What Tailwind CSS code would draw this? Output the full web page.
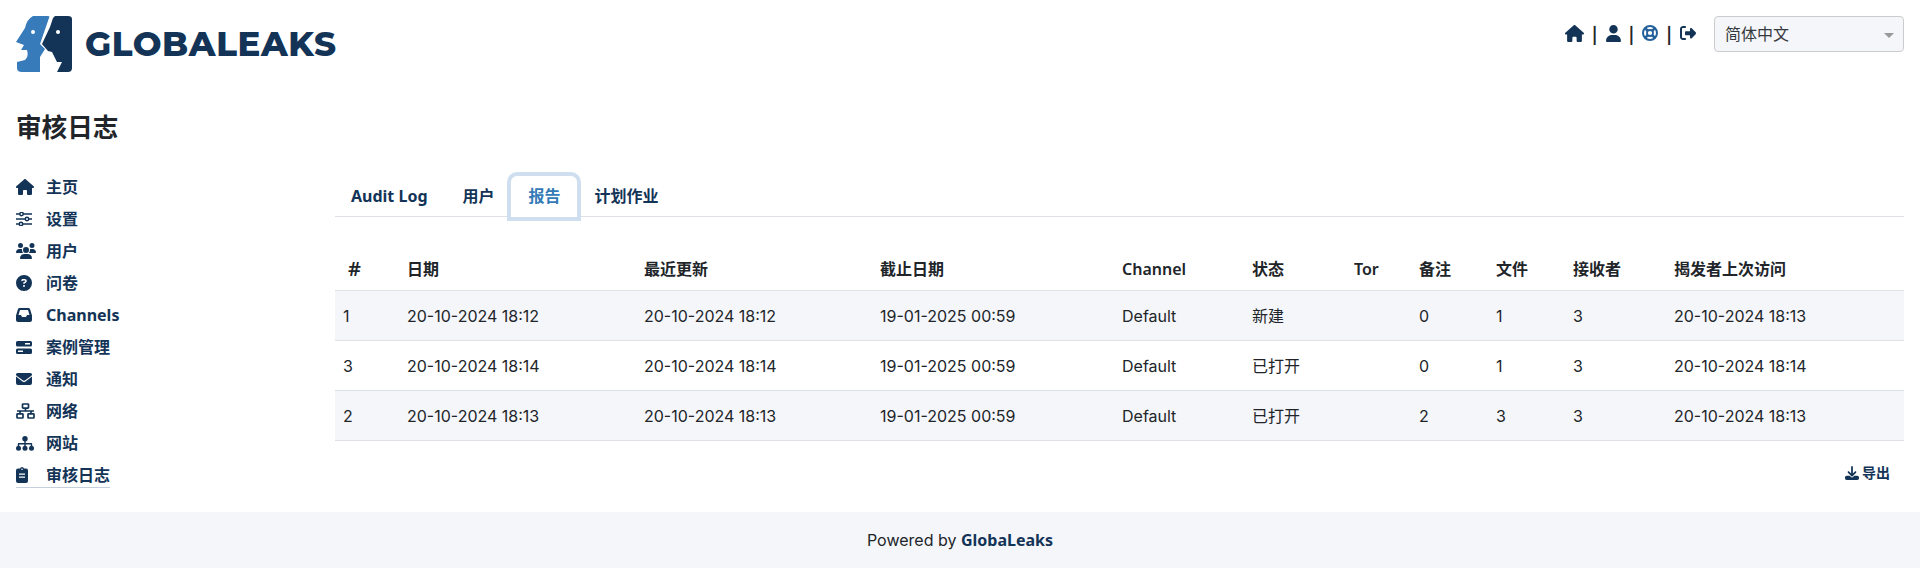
<!DOCTYPE html>
<html lang="zh-CN">
<head>
    <meta charset="UTF-8">
    <title>GlobaLeaks</title>
    <script src="https://cdn.jsdelivr.net/npm/@tailwindcss/browser@4"></script>
</head>
<body class="bg-white text-[#212529] font-['Inter','Noto_Sans_CJK_SC',sans-serif] text-base h-[568px] overflow-hidden flex flex-col">

    <!-- Header -->
    <header class="flex justify-between px-4 pt-4 h-[80px]">
        <div class="flex items-center h-14">
            <svg class="w-[56px] h-[56px] mr-[13px]" viewBox="16 16 56 56">
                <path fill="#377bbb" d="M33 16H48Q50 16 49 18L40 44L45 49L40 57V72H22Q17 72 17 68V62L25 60Q29 56 27 50H21L24 45L16 42L25 28Q27 19 33 16Z"/>
                <circle cx="33" cy="32" r="2" fill="#fff"/>
                <path fill="#133457" d="M55 16H68Q72 16 72 19V68Q72 72 68 72H57L62 62L57 62L52 52L48 51L42 44L50 27L53 18Z"/>
                <circle cx="58" cy="32" r="2" fill="#fff"/>
            </svg>
            <span class="font-['Montserrat','Inter',sans-serif] font-extrabold text-[34px] leading-none tracking-[0.6px] text-[#133457]">GLOBALEAKS</span>
        </div>
        <div class="flex items-start">
            <div class="flex items-center h-[34px] text-[#133457] gap-[8px] mr-[18px]">
                <svg class="w-[19px] h-[17px]" viewBox="0 0 576 512" fill="currentColor"><path d="M575.800 255.500c0 18-15 32.100-32 32.100h-32l.7 160.200c0 2.700-.2 5.400-.5 8.100V472c0 22.100-17.900 40-40 40H456c-1.100 0-2.200 0-3.300-.1c-1.400 .1-2.800 .1-4.200 .1H416 392c-22.100 0-40-17.900-40-40V448 384c0-17.700-14.300-32-32-32H256c-17.700 0-32 14.300-32 32v64 24c0 22.100-17.900 40-40 40H160 128.100c-1.500 0-3-.1-4.500-.2c-1.200 .1-2.400 .2-3.600 .2H104c-22.100 0-40-17.900-40-40V360c0-.9 0-1.900 .1-2.800V287.600H32c-18 0-32-14-32-32.100c0-9 3-17 10-24L266.400 8c7-7 15-8 22-8s15 2 21 7L564.800 231.500c8 7 12 15 11 24z"/></svg>
                <span class="text-[#212529] text-base leading-none mt-[3px] font-semibold">|</span>
                <svg class="w-[15px] h-[17px]" viewBox="0 0 448 512" fill="currentColor"><path d="M224 256A128 128 0 1 0 224 0a128 128 0 1 0 0 256zm-45.700 48C79.800 304 0 383.800 0 482.300C0 498.700 13.300 512 29.700 512H418.300c16.400 0 29.700-13.300 29.700-29.700C448 383.800 368.200 304 269.700 304H178.300z"/></svg>
                <span class="text-[#212529] text-base leading-none mt-[3px] font-semibold">|</span>
                <svg class="w-[16px] h-[16px] text-[#24609b]" viewBox="0 0 16 16" fill="none" stroke="currentColor">
                    <circle cx="8" cy="8" r="7" stroke-width="2"/><circle cx="8" cy="8" r="3" stroke-width="1.800"/>
                    <path d="M3 3L5.800 5.800M13 3L10.200 5.800M3 13L5.800 10.200M13 13L10.200 10.200" stroke-width="2.600"/>
                </svg>
                <span class="text-[#212529] text-base leading-none mt-[3px] font-semibold">|</span>
                <svg class="w-[16px] h-[16px]" viewBox="0 0 512 512" fill="currentColor"><path d="M502.600 278.600c12.500-12.500 12.500-32.800 0-45.300l-128-128c-9.200-9.200-22.900-11.900-34.900-6.900s-19.800 16.600-19.800 29.600l0 72-128 0c-17.700 0-32 14.300-32 32l0 64c0 17.700 14.300 32 32 32l128 0 0 72c0 12.900 7.800 24.600 19.800 29.600s25.700 2.200 34.900-6.900l128-128zM160 96c17.700 0 32-14.300 32-32s-14.300-32-32-32L96 32C43 32 0 75 0 128L0 384c0 53 43 96 96 96l64 0c17.700 0 32-14.300 32-32s-14.300-32-32-32l-64 0c-17.700 0-32-14.300-32-32l0-256c0-17.700 14.300-32 32-32l64 0z"/></svg>
            </div>
            <div class="w-[190px] h-[36px] bg-[#f5f6fa] border border-[#ccc] rounded-[4px] flex items-center justify-between pl-[10px] pr-[9px] text-[#343a40]">
                <span>简体中文</span>
                <span class="w-0 h-0 border-x-[5px] border-x-transparent border-t-[5px] border-t-[#999] mt-[2px]"></span>
            </div>
        </div>
    </header>

    <div class="flex flex-1 min-h-0 px-4">
        <!-- Sidebar -->
        <aside class="w-[319px] shrink-0">
            <h1 class="text-[25.6px] font-bold leading-[32px] mt-[32px] mb-[27px]">审核日志</h1>
            <nav class="flex flex-col text-[#133457] font-['Noto_Sans','Noto_Sans_CJK_SC',sans-serif] font-bold text-base">
                <a class="flex items-center h-[32px]"><span class="w-[30px] flex"><svg class="w-[18px] h-[16px]" viewBox="0 0 576 512" fill="currentColor"><path d="M575.800 255.500c0 18-15 32.100-32 32.100h-32l.7 160.200c0 2.700-.2 5.400-.5 8.100V472c0 22.100-17.900 40-40 40H456c-1.100 0-2.200 0-3.300-.1c-1.400 .1-2.800 .1-4.200 .1H416 392c-22.100 0-40-17.900-40-40V448 384c0-17.700-14.300-32-32-32H256c-17.700 0-32 14.300-32 32v64 24c0 22.100-17.900 40-40 40H160 128.100c-1.500 0-3-.1-4.500-.2c-1.200 .1-2.400 .2-3.600 .2H104c-22.100 0-40-17.900-40-40V360c0-.9 0-1.900 .1-2.800V287.600H32c-18 0-32-14-32-32.100c0-9 3-17 10-24L266.400 8c7-7 15-8 22-8s15 2 21 7L564.800 231.500c8 7 12 15 11 24z"/></svg></span>主页</a>
                <a class="flex items-center h-[32px]"><span class="w-[30px] flex"><svg class="w-[16px] h-[14px]" viewBox="0 0 16 14" fill="none" stroke="currentColor" stroke-width="1.500"><path d="M0 2H16M0 7H16M0 12H16"/><circle cx="5.500" cy="2" r="1.700" fill="#fff"/><circle cx="11" cy="7" r="1.700" fill="#fff"/><circle cx="5" cy="12" r="1.700" fill="#fff"/></svg></span>设置</a>
                <a class="flex items-center h-[32px]"><span class="w-[30px] flex"><svg class="w-[20px] h-[16px]" viewBox="0 0 640 512" fill="currentColor"><path d="M144 0a80 80 0 1 1 0 160A80 80 0 1 1 144 0zM512 0a80 80 0 1 1 0 160A80 80 0 1 1 512 0zM0 298.700C0 239.800 47.800 192 106.700 192h42.700c15.900 0 31 3.500 44.600 9.700c-1.300 7.200-1.900 14.700-1.900 22.300c0 38.200 16.800 72.500 43.300 96H21.300C9.600 320 0 310.400 0 298.700zM405.300 320h-.7c26.600-23.500 43.300-57.800 43.300-96c0-7.600-.7-15-1.900-22.300c13.600-6.300 28.700-9.700 44.600-9.700h42.700C592.200 192 640 239.800 640 298.700c0 11.800-9.600 21.300-21.300 21.300H405.300zM224 224a96 96 0 1 1 192 0 96 96 0 1 1 -192 0zM128 485.300C128 411.700 187.700 352 261.300 352H378.700C452.300 352 512 411.700 512 485.300c0 14.700-11.900 26.700-26.700 26.700H154.700c-14.700 0-26.700-11.900-26.700-26.700z"/></svg></span>用户</a>
                <a class="flex items-center h-[32px]"><span class="w-[30px] flex"><svg class="w-[16px] h-[16px]" viewBox="0 0 512 512" fill="currentColor"><path d="M256 512A256 256 0 1 0 256 0a256 256 0 1 0 0 512zM169.800 165.300c7.900-22.300 29.100-37.300 52.800-37.300h58.300c34.900 0 63.100 28.300 63.100 63.100c0 22.600-12.100 43.500-31.700 54.800L280 264.400c-.2 13-10.900 23.600-24 23.600c-13.300 0-24-10.700-24-24V250.500c0-8.600 4.600-16.500 12.100-20.800l44.300-25.400c4.700-2.700 7.600-7.700 7.600-13.100c0-8.400-6.800-15.100-15.100-15.100H222.600c-3.400 0-6.400 2.100-7.500 5.300l-.4 1.200c-4.400 12.500-18.200 19-30.600 14.600s-19-18.200-14.600-30.600l.4-1.200zM224 352a32 32 0 1 1 64 0 32 32 0 1 1 -64 0z"/></svg></span>问卷</a>
                <a class="flex items-center h-[32px]"><span class="w-[30px] flex"><svg class="w-[16px] h-[14px]" viewBox="0 0 16 14" fill="currentColor"><path fill-rule="evenodd" d="M3.500 0H12.500Q13.500 0 14 1L16 7.500V12Q16 14 14 14H2Q0 14 0 12V7.500L2 1Q2.500 0 3.500 0ZM4 2L2.500 7H5L6 9H10L11 7H13.500L12 2Z"/></svg></span>Channels</a>
                <a class="flex items-center h-[32px]"><span class="w-[30px] flex"><svg class="w-[16px] h-[13px]" viewBox="0 0 16 13" fill="currentColor"><path fill-rule="evenodd" d="M1.500 0H14.500Q16 0 16 1.500V4Q16 5.500 14.500 5.500H1.500Q0 5.500 0 4V1.500Q0 0 1.500 0ZM9 2V3.500H14V2ZM1.500 7.500H14.500Q16 7.500 16 9V11.500Q16 13 14.500 13H1.500Q0 13 0 11.500V9Q0 7.500 1.500 7.500ZM2 9.500V11H7V9.500Z"/></svg></span>案例管理</a>
                <a class="flex items-center h-[32px]"><span class="w-[30px] flex"><svg class="w-[16px] h-[12px]" viewBox="0 0 16 12" fill="currentColor"><path d="M1.500 0H14.500Q16 0 16 1.500Q16 2.200 15.400 2.700L8.900 7.500Q8 8.200 7.100 7.500L.6 2.700Q0 2.200 0 1.500Q0 0 1.500 0ZM0 3.600L6.500 8.500Q8 9.600 9.500 8.500L16 3.600V10Q16 12 14 12H2Q0 12 0 10Z"/></svg></span>通知</a>
                <a class="flex items-center h-[32px]"><span class="w-[30px] flex"><svg class="w-[19px] h-[16px]" viewBox="0 0 19 16" fill="none" stroke="currentColor" stroke-width="1.700"><rect x="6.500" y="1" width="6" height="4.200" rx=".6"/><rect x="1" y="10.800" width="6" height="4.200" rx=".6"/><rect x="12" y="10.800" width="6" height="4.200" rx=".6"/><path d="M1 8H18M4 8V10.800M15 8V10.800M9.500 5.200V8"/></svg></span>网络</a>
                <a class="flex items-center h-[32px]"><span class="w-[30px] flex"><svg class="w-[18px] h-[15px]" viewBox="0 0 18 15" fill="currentColor"><circle cx="9" cy="2.700" r="2.700"/><circle cx="2.500" cy="12.300" r="2.500"/><circle cx="9" cy="12.300" r="2.500"/><circle cx="15.500" cy="12.300" r="2.500"/><path d="M8.300 4H9.700V7H15.500Q16.200 7 16.200 8V10H14.800V8.400H9.700V10H8.300V8.400H3.200V10H1.800V8Q1.800 7 2.500 7H8.300Z"/></svg></span>网站</a>
                <a class="flex items-center h-[29px] pt-[3px] w-fit border-b border-[#c6d0dd]"><span class="w-[30px] flex"><svg class="w-[12px] h-[16px]" viewBox="0 0 12 16" fill="currentColor"><path fill-rule="evenodd" d="M4 1.500Q4.500 0 6 0T8 1.500H10Q12 1.500 12 3.500V14Q12 16 10 16H2Q0 16 0 14V3.500Q0 1.500 2 1.500ZM6 1.500A.8 .8 0 1 0 6 3.100A.8 .8 0 1 0 6 1.500ZM3 6.500V7.700H9V6.500ZM3 9.500V10.700H9V9.500Z"/></svg></span>审核日志</a>
            </nav>
        </aside>

        <!-- Main -->
        <main class="flex-1 min-w-0 pt-[93px]">
            <div class="flex h-[44px] border-b border-[#dee2e6] font-['Noto_Sans','Noto_Sans_CJK_SC',sans-serif] font-bold text-[#133457] text-base">
                <a class="h-[41px] mt-[3px] pb-[2px] px-4 flex items-center">Audit Log</a>
                <a class="h-[41px] mt-[3px] pb-[2px] px-4 flex items-center ml-[3px]">用户</a>
                <a class="relative h-[41px] mt-[3px] pb-[2px] pl-[18px] pr-[16px] flex items-center text-[#337ab7] bg-white rounded-t-[6px] ring-4 ring-[#cfdfef]">报告</a>
                <a class="h-[41px] mt-[3px] pb-[2px] px-4 flex items-center ml-[2px]">计划作业</a>
            </div>

            <table class="w-[1569px] table-fixed mt-[32px] text-base border-collapse">
                <colgroup>
                    <col class="w-[64px]"><col class="w-[237px]"><col class="w-[236px]"><col class="w-[242px]"><col class="w-[130px]"><col class="w-[102px]"><col class="w-[65px]"><col class="w-[77px]"><col class="w-[77px]"><col class="w-[101px]"><col class="w-[238px]">
                </colgroup>
                <thead class="font-['Noto_Sans','Noto_Sans_CJK_SC',sans-serif] font-semibold text-left">
                    <tr class="h-[41px] border-b border-[#dee2e6]">
                        <th class="pl-[13px] pr-2 font-semibold text-[20px] leading-none">#</th><th class="px-2 font-semibold">日期</th><th class="px-2 font-semibold">最近更新</th><th class="px-2 font-semibold">截止日期</th><th class="px-2 font-semibold">Channel</th><th class="px-2 font-semibold">状态</th><th class="px-2 font-semibold">Tor</th><th class="px-2 font-semibold">备注</th><th class="px-2 font-semibold">文件</th><th class="px-2 font-semibold">接收者</th><th class="px-2 font-semibold">揭发者上次访问</th>
                    </tr>
                </thead>
                <tbody class="[&_td]:pt-[2px]">
                    <tr class="h-[50px] bg-[#f5f6fa] border-b border-[#dee2e6]">
                        <td class="px-2">1</td><td class="px-2">20-10-2024 18:12</td><td class="px-2">20-10-2024 18:12</td><td class="px-2">19-01-2025 00:59</td><td class="px-2">Default</td><td class="px-2">新建</td><td class="px-2"></td><td class="px-2">0</td><td class="px-2">1</td><td class="px-2">3</td><td class="px-2">20-10-2024 18:13</td>
                    </tr>
                    <tr class="h-[50px] border-b border-[#dee2e6]">
                        <td class="px-2">3</td><td class="px-2">20-10-2024 18:14</td><td class="px-2">20-10-2024 18:14</td><td class="px-2">19-01-2025 00:59</td><td class="px-2">Default</td><td class="px-2">已打开</td><td class="px-2"></td><td class="px-2">0</td><td class="px-2">1</td><td class="px-2">3</td><td class="px-2">20-10-2024 18:14</td>
                    </tr>
                    <tr class="h-[50px] bg-[#f5f6fa] border-b border-[#dee2e6]">
                        <td class="px-2">2</td><td class="px-2">20-10-2024 18:13</td><td class="px-2">20-10-2024 18:13</td><td class="px-2">19-01-2025 00:59</td><td class="px-2">Default</td><td class="px-2">已打开</td><td class="px-2"></td><td class="px-2">2</td><td class="px-2">3</td><td class="px-2">3</td><td class="px-2">20-10-2024 18:13</td>
                    </tr>
                </tbody>
            </table>

            <div class="flex justify-end items-center pr-[14px] mt-[25px] text-[#133457] text-[14px] font-bold gap-[3px] leading-none">
                <svg class="w-[14px] h-[14px]" viewBox="0 0 512 512" fill="currentColor"><path d="M288 32c0-17.700-14.300-32-32-32s-32 14.300-32 32V274.700l-73.400-73.400c-12.500-12.500-32.800-12.500-45.300 0s-12.500 32.800 0 45.300l128 128c12.500 12.500 32.800 12.500 45.300 0l128-128c12.500-12.500 12.500-32.800 0-45.300s-32.800-12.500-45.300 0L288 274.700V32zM64 352c-35.300 0-64 28.700-64 64v32c0 35.300 28.700 64 64 64H448c35.300 0 64-28.700 64-64V416c0-35.300-28.700-64-64-64H346.500l-45.300 45.300c-25 25-65.500 25-90.500 0L165.500 352H64z"/></svg>
                <span>导出</span>
            </div>
        </main>
    </div>

    <!-- Footer -->
    <footer class="h-[56px] bg-[#f5f6fa] flex items-center justify-center text-base shrink-0">
        <span>Powered by <a class="font-['Noto_Sans',sans-serif] font-bold text-[#133457]">GlobaLeaks</a></span>
    </footer>
</body>
</html>
